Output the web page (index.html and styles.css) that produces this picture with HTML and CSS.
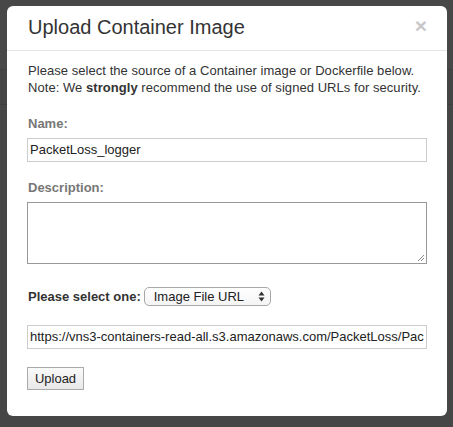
FILE: index.html
```html
<!DOCTYPE html>
<html>
<head>
<meta charset="utf-8">
<link rel="stylesheet" href="styles.css">
</head>
<body>
<div class="backdrop">
  <div class="modal">
    <div class="modal-header">
      <h3 class="title">Upload Container Image</h3>
      <span class="close">×</span>
    </div>
    <div class="modal-body">
      <p class="intro">Please select the source of a Container image or Dockerfile below.<br>Note: We <strong>strongly</strong> recommend the use of signed URLs for security.</p>
      <label class="field-label">Name:</label>
      <div class="text-input">PacketLoss_logger</div>
      <label class="field-label desc-label">Description:</label>
      <div class="textarea"><svg class="grip" width="8" height="8" viewBox="0 0 8 8"><path d="M7 1 L1 7 M7 4 L4 7" stroke="#888" stroke-width="1" fill="none"/></svg></div>
      <div class="select-row">
        <span class="select-label">Please select one:</span>
        <span class="select"><span class="select-text">Image File URL</span><svg class="arrows" width="7" height="11" viewBox="0 0 7 11"><path d="M3.5 0.5 L6.5 4.5 L0.5 4.5 Z M3.5 10.5 L6.5 6.5 L0.5 6.5 Z" fill="#333"/></svg></span>
      </div>
      <div class="text-input url-input">https://vns3-containers-read-all.s3.amazonaws.com/PacketLoss/Pac</div>
      <button class="btn">Upload</button>
    </div>
  </div>
</div>
</body>
</html>
```
FILE: styles.css
```css
html, body {
  margin: 0;
  padding: 0;
  background: #464646;
}
body {
  width: 453px;
  height: 427px;
  overflow: hidden;
  font-family: "Liberation Sans", Arial, sans-serif;
  color: #333;
}
.backdrop {
  padding: 6px 6px 0 7px;
  height: 427px;
  box-sizing: border-box;
  background: linear-gradient(#484848 0, #484848 69px, #3f3f3f 69px, #3f3f3f 70px, #454545 70px, #454545 104px, #3e3e3e 104px, #3e3e3e 105px, #464646 105px);
}
.modal {
  width: 440px;
  height: 410px;
  background: #fff;
  border-radius: 6px;
  box-sizing: border-box;
}
.modal-header {
  display: flex;
  justify-content: space-between;
  align-items: flex-start;
  padding: 8px 20px 10px 21px;
  border-bottom: 1px solid #e5e5e5;
}
.title {
  margin: 0;
  font-size: 20px;
  line-height: 26px;
  font-weight: normal;
  color: #333;
}
.close {
  font-size: 21px;
  font-weight: bold;
  line-height: 20px;
  color: #c8c8c8;
  margin-top: 2px;
}
.modal-body {
  padding: 0 20px;
  display: flex;
  flex-direction: column;
  align-items: flex-start;
}
.intro {
  margin: 11px 0 0 1px;
  font-size: 13px;
  line-height: 17px;
  letter-spacing: 0.05px;
}
.intro strong { font-weight: bold; }
.field-label {
  display: block;
  margin: 19px 0 0 1px;
  font-size: 13px;
  line-height: 17px;
  font-weight: bold;
  color: #777;
}
.desc-label { margin-top: 17px; }
.text-input {
  margin-top: 6px;
  width: 400px;
  height: 24px;
  box-sizing: border-box;
  border: 1px solid #ccc;
  padding: 0 2px;
  font-size: 13px;
  line-height: 22px;
  color: #222;
  white-space: nowrap;
  overflow: hidden;
}
.textarea {
  margin-top: 6px;
  width: 400px;
  height: 62px;
  box-sizing: border-box;
  border: 1px solid #999;
  display: flex;
  justify-content: flex-end;
  align-items: flex-end;
  padding: 0 1px 1px 0;
}
.grip { display: block; }
.select-row {
  margin-top: 23px;
  display: flex;
  align-items: center;
  height: 19px;
}
.select-label {
  font-size: 13px;
  font-weight: bold;
  color: #333;
  margin-left: 1px;
  margin-right: 3px;
}
.select {
  display: flex;
  align-items: center;
  justify-content: space-between;
  width: 127px;
  height: 19px;
  box-sizing: border-box;
  border: 1px solid #a8a8a8;
  border-radius: 5px;
  background: linear-gradient(#fff, #f4f4f4);
  padding: 0 5px 0 9px;
  font-size: 13px;
  color: #222;
}
.arrows { display: block; }
.url-input { margin-top: 19px; }
.btn {
  margin-top: 18px;
  width: 57px;
  height: 23px;
  padding: 0;
  border: 1px solid #aaa;
  background: linear-gradient(#fafafa, #e8e8e8);
  font-family: "Liberation Sans", Arial, sans-serif;
  font-size: 13px;
  color: #222;
}
```
